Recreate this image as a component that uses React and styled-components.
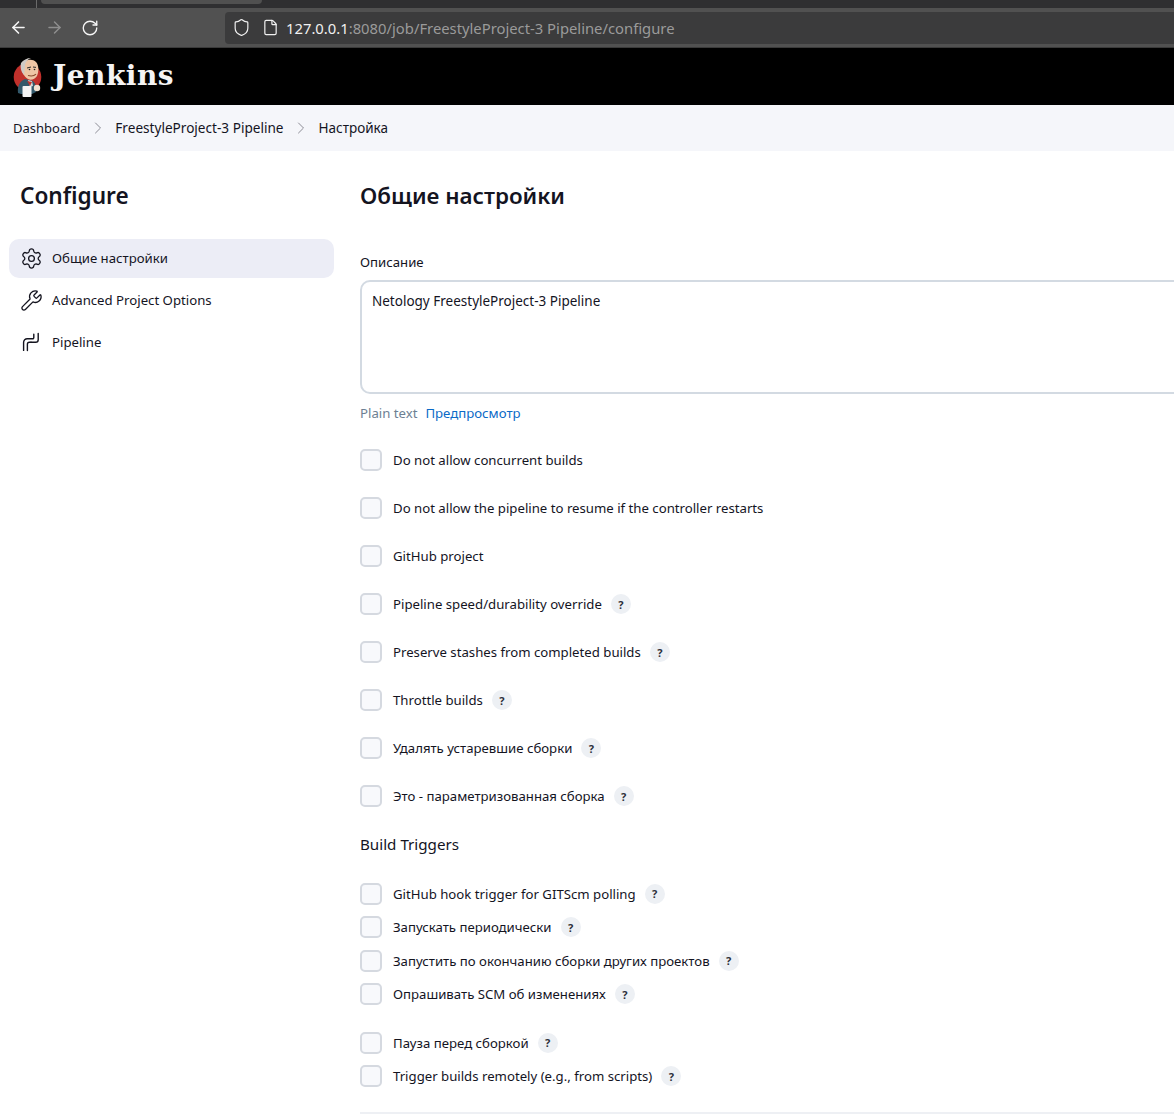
import React from "react";
import styled, { createGlobalStyle } from "styled-components";
import { ArrowLeft, ArrowRight, RotateCw, Shield, File, ChevronRight, Settings, Wrench } from "lucide-react";

const Global = createGlobalStyle`
  html, body { margin: 0; padding: 0; background: #fff; overflow: hidden; }
  body { font-family: "Noto Sans", "Liberation Sans", sans-serif; color: #14141f; }
  * { box-sizing: border-box; }
`;
const Page = styled.div`width: 1174px; height: 1115px; overflow: hidden; display: flex; flex-direction: column;`;
const TabStrip = styled.div`height: 8px; background: #2f2f31; display: flex; flex-shrink: 0;`;
const TabSep = styled.div`width: 1px; height: 8px; margin-left: 36px; background: #6a6a6a;`;
const ActiveTab = styled.div`width: 221px; height: 4px; margin-left: 4px; background: #505050; border-radius: 0 0 4px 4px;`;
const Toolbar = styled.div`height: 40px; flex-shrink: 0; background: #515151; display: flex; align-items: center; padding-left: 8px; color: #f4f4f4; border-bottom: 1px solid #3a3a3a;`;
const NavButton = styled.div`width: 20px; height: 20px; margin-right: ${(p) => p.$gap}px; color: ${(p) => p.$dim ? "#8f8f8f" : "#f6f6f6"}; display: flex; align-items: center; justify-content: center;`;
const UrlBar = styled.div`margin-left: 9px; flex: 1; height: 32px; background: #3b3b3c; border-radius: 4px 0 0 4px; display: flex; align-items: center; padding-left: 6px; font-size: 14.8px; color: #f0f0f0;`;
const UrlIcon = styled.div`width: 20px; height: 20px; margin-right: ${(p) => p.$gap}px; display: flex; align-items: center; justify-content: center; color: #f0f0f0;`;
const UrlDim = styled.span`color: #9a9a9a;`;
const Header = styled.header`height: 57px; flex-shrink: 0; background: #000; display: flex; align-items: center; padding-left: 13px; gap: 10px;`;
const Brand = styled.div`font-family: "DejaVu Serif", serif; font-weight: 700; font-size: 28px; letter-spacing: 0.5px; color: #f4f4f4; line-height: 1; margin-top: -2px;`;
const Crumbs = styled.nav`height: 46px; flex-shrink: 0; background: #f5f6fa; display: flex; align-items: center; padding-left: 13px; padding-bottom: 1px;`;
const Crumb = styled.span`color: #14141f; white-space: nowrap; font-size: ${(p) => p.$size}px;`;
const CrumbSep = styled.span`width: ${(p) => p.$w}px; display: flex; justify-content: center; color: #8d8d96;`;
const Main = styled.div`display: flex; flex: 1; min-height: 0;`;
const Side = styled.aside`width: 360px; flex-shrink: 0; padding: 28px 26px 0 9px;`;
const SideTitle = styled.h1`margin: 0 0 27px 11px; font-size: 22.6px; font-weight: 600; line-height: 33px;`;
const SideItem = styled.div`height: 39px; margin-bottom: 3px; border-radius: 10px; display: flex; align-items: center; padding-left: 10px; font-size: 13.2px; padding-bottom: 1px; background: ${(p) => p.$active ? "#ecedf6" : "transparent"}; color: #14141f;`;
const SideIcon = styled.span`width: 24px; height: 24px; margin-right: 9px; display: flex; align-items: center; justify-content: center;`;
const Content = styled.main`flex: 1; padding-top: 28px; min-width: 0;`;
const SectionTitle = styled.h2`margin: 0 0 41px; font-size: 22.4px; font-weight: 600; line-height: 33px;`;
const FieldLabel = styled.div`font-size: 13.2px; line-height: 19px; margin-bottom: 8px;`;
const TextBox = styled.div`width: 900px; height: 114px; border: 2px solid #d3dae2; border-radius: 10px; padding: 9px 10px; font-size: 13.5px; line-height: 21px; background: #fff;`;
const PreviewRow = styled.div`display: flex; gap: 8px; font-size: 13.2px; line-height: 19px; margin-top: 10px; margin-bottom: 13px;`;
const Plain = styled.span`color: #6d7f93;`;
const Preview = styled.span`color: #0b6ac7;`;
const Row = styled.div`height: ${(p) => p.$h}px; display: flex; align-items: center; font-size: 13.2px;`;
const Box = styled.span`width: 22px; height: 22px; border: 2px solid #d5d9e0; border-radius: 5px; background: #f8f9fc; flex-shrink: 0; margin-right: 11px;`;
const Help = styled.span`width: 20px; height: 20px; border-radius: 50%; background: #edf0f4; margin-left: 9px; display: flex; align-items: center; justify-content: center; font-size: 11px; font-weight: 700; color: #2c2f3a;`;
const SubTitle = styled.h3`margin: 13px 0 22px; font-size: 15.2px; font-weight: 400; line-height: 22px;`;
const Gap = styled.div`height: ${(p) => p.$h}px;`;
const Rule = styled.div`width: 900px; height: 2px; background: #eef0f4; margin-top: 19px;`;

const Logo = () => (
  <svg width="30" height="40" viewBox="0 0 30 40">
    <circle cx="14.5" cy="20" r="13.8" fill="#c0302b" />
    <path d="M5 36c-1-7 2-12 7-14l8 2c3 3 4 7 3 11l-4 2H8z" fill="#33596b" />
    <path d="M15 23l4 1 1 5-3 1z" fill="#d8d8d8" />
    <path d="M14 24l5 1-2 4z" fill="#c0302b" />
    <path d="M9 8c2-5 10-7 14-3 3 3 3 10 1 14-2 3-6 5-9 3-4-2-7-8-6-14z" fill="#eec5a5" />
    <path d="M8 6c2-3 6-5 10-5-3 1-6 4-6 8l-1 9c-3-3-4-8-3-12z" fill="#cfcac6" />
    <path d="M14 11l4-1M20 10l3 .4" stroke="#2b2b2b" strokeWidth="1" />
    <circle cx="16.5" cy="12.5" r=".8" fill="#222" />
    <circle cx="21.5" cy="12.5" r=".8" fill="#222" />
    <path d="M15 18.5c3 .8 6 .6 8-1.4" stroke="#8a4b2e" strokeWidth="1.1" fill="none" />
    <rect x="9.5" y="29" width="9" height="11" rx="1" fill="#f4f4f4" />
    <circle cx="24" cy="31" r="3.2" fill="#f0e0d0" />
  </svg>
);

const PipelineIcon = () => (
  <svg width="20" height="20" viewBox="0 0 20 20" fill="none" stroke="#14141f" strokeWidth="1.4" strokeLinecap="round">
    <path d="M17.2 1.5v6.2a2.6 2.6 0 0 1-2.6 2.6H10" />
    <path d="M12.8 2.2v3.4a1.2 1.2 0 0 1-1.2 1.2H6.2a3.6 3.6 0 0 0-3.6 3.6v8" />
    <path d="M10 10.3H8.4a2 2 0 0 0-2 2v6.2" />
  </svg>
);

const first = [
  ["Do not allow concurrent builds"],
  ["Do not allow the pipeline to resume if the controller restarts"],
  ["GitHub project"],
  ["Pipeline speed/durability override", 1],
  ["Preserve stashes from completed builds", 1],
  ["Throttle builds", 1],
  ["Удалять устаревшие сборки", 1],
  ["Это - параметризованная сборка", 1],
];
const triggers = [
  ["GitHub hook trigger for GITScm polling", 33.5],
  ["Запускать периодически", 33.5],
  ["Запустить по окончанию сборки других проектов", 33.5],
  ["Опрашивать SCM об изменениях", 33.5],
];
const after = [
  ["Пауза перед сборкой", 33.5],
  ["Trigger builds remotely (e.g., from scripts)", 33.5],
];

const Check = ({ text, help, h }) => (
  <Row $h={h}>
    <Box />
    <span>{text}</span>
    {help ? <Help>?</Help> : null}
  </Row>
);

export default function App() {
  return (
    <Page>
      <Global />
      <TabStrip><TabSep /><ActiveTab /></TabStrip>
      <Toolbar>
        <NavButton $gap={16}><ArrowLeft size={19} strokeWidth={2} /></NavButton>
        <NavButton $gap={16} $dim><ArrowRight size={19} strokeWidth={1.8} /></NavButton>
        <NavButton $gap={116}><RotateCw size={18} strokeWidth={1.8} /></NavButton>
        <UrlBar>
          <UrlIcon $gap={9}><Shield size={19} strokeWidth={1.5} /></UrlIcon>
          <UrlIcon $gap={6}><File size={17} strokeWidth={1.7} /></UrlIcon>
          <span>127.0.0.1<UrlDim>:8080/job/FreestyleProject-3 Pipeline/configure</UrlDim></span>
        </UrlBar>
      </Toolbar>
      <Header><Logo /><Brand>Jenkins</Brand></Header>
      <Crumbs>
        <Crumb $size={13}>Dashboard</Crumb>
        <CrumbSep $w={35}><ChevronRight size={20} strokeWidth={1.2} /></CrumbSep>
        <Crumb $size={13.6}>FreestyleProject-3 Pipeline</Crumb>
        <CrumbSep $w={35}><ChevronRight size={20} strokeWidth={1.2} /></CrumbSep>
        <Crumb $size={13.5}>Настройка</Crumb>
      </Crumbs>
      <Main>
        <Side>
          <SideTitle>Configure</SideTitle>
          <SideItem $active><SideIcon><Settings size={23} strokeWidth={1.35} /></SideIcon>Общие настройки</SideItem>
          <SideItem><SideIcon><Wrench size={23} strokeWidth={1.35} /></SideIcon>Advanced Project Options</SideItem>
          <SideItem><SideIcon><PipelineIcon /></SideIcon>Pipeline</SideItem>
        </Side>
        <Content>
          <SectionTitle>Общие настройки</SectionTitle>
          <FieldLabel>Описание</FieldLabel>
          <TextBox>Netology FreestyleProject-3 Pipeline</TextBox>
          <PreviewRow><Plain>Plain text</Plain><Preview>Предпросмотр</Preview></PreviewRow>
          {first.map(([t, help]) => <Check key={t} text={t} help={help} h={48} />)}
          <SubTitle>Build Triggers</SubTitle>
          {triggers.map(([t, h]) => <Check key={t} text={t} help h={h} />)}
          <Gap $h={15} />
          {after.map(([t, h]) => <Check key={t} text={t} help h={h} />)}
          <Rule />
        </Content>
      </Main>
    </Page>
  );
}
